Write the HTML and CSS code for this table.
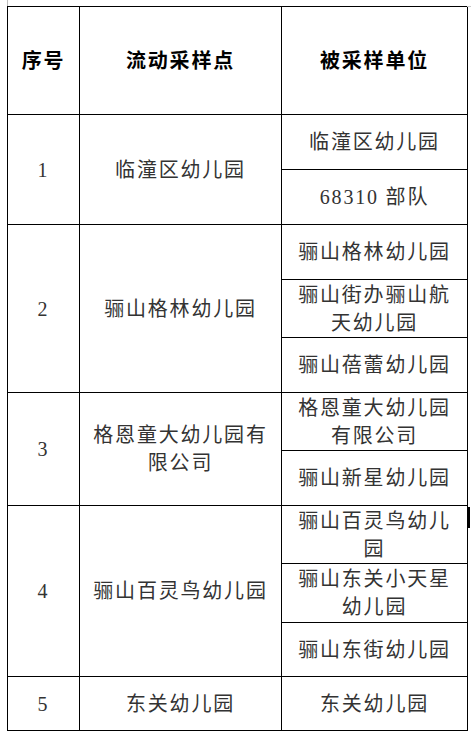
FILE: index.html
```html
<!DOCTYPE html>
<html lang="zh-CN">
<head>
<meta charset="utf-8">
<title>流动采样点</title>
<link rel="stylesheet" href="styles.css">
</head>
<body>
<div class="page">
  <span class="mark-left"></span>
  <span class="mark-right"></span>
  <span class="caret"></span>
  <table class="sheet">
    <colgroup>
      <col class="c1"><col class="c2"><col class="c3">
    </colgroup>
    <thead>
      <tr class="hd">
        <th>序号</th>
        <th>流动采样点</th>
        <th>被采样单位</th>
      </tr>
    </thead>
    <tbody>
      <tr class="h55">
        <td rowspan="2">1</td>
        <td rowspan="2">临潼区幼儿园</td>
        <td>临潼区幼儿园</td>
      </tr>
      <tr class="h55"><td>68310 部队</td></tr>

      <tr class="h55">
        <td rowspan="3">2</td>
        <td rowspan="3">骊山格林幼儿园</td>
        <td>骊山格林幼儿园</td>
      </tr>
      <tr class="h58"><td>骊山街办骊山航天幼儿园</td></tr>
      <tr class="h55"><td>骊山蓓蕾幼儿园</td></tr>

      <tr class="h58">
        <td rowspan="2">3</td>
        <td rowspan="2">格恩童大幼儿园有限公司</td>
        <td>格恩童大幼儿园有限公司</td>
      </tr>
      <tr class="h55"><td>骊山新星幼儿园</td></tr>

      <tr class="h58">
        <td rowspan="3">4</td>
        <td rowspan="3">骊山百灵鸟幼儿园</td>
        <td>骊山百灵鸟幼儿园</td>
      </tr>
      <tr class="h59"><td>骊山东关小天星幼儿园</td></tr>
      <tr class="h54"><td>骊山东街幼儿园</td></tr>

      <tr class="h54">
        <td>5</td>
        <td>东关幼儿园</td>
        <td>东关幼儿园</td>
      </tr>
    </tbody>
  </table>
</div>
</body>
</html>
```

FILE: styles.css
```css
html, body {
  margin: 0;
  padding: 0;
  background: #ffffff;
}

.page {
  position: relative;
  padding: 6px 0 0 7px;
}

.sheet {
  border-collapse: collapse;
  table-layout: fixed;
  width: 460px;
  font-family: "Liberation Serif", "Noto Sans CJK SC", serif;
  font-size: 20px;
  line-height: 28px;
  color: #333333;
}

.c1 { width: 72px; }
.c2 { width: 202px; }
.c3 { width: 186px; }

.sheet th,
.sheet td {
  border: 1px solid #000;
  padding: 0 10px;
  text-align: center;
  vertical-align: middle;
  letter-spacing: 1.8px;
  word-break: break-all;
}

.sheet th {
  font-weight: 700;
  color: #000;
}

.hd { height: 108px; }
.h54 { height: 54px; }
.h55 { height: 55px; }
.h58 { height: 58px; }
.h59 { height: 59px; }

.mark-left {
  position: absolute;
  left: 7px;
  top: 0;
  height: 6px;
  border-left: 1px dashed #bdbdbd;
}

.mark-right {
  position: absolute;
  left: 467px;
  top: 6px;
  width: 4px;
  border-top: 1px solid #c8c8c8;
}

.caret {
  position: absolute;
  left: 468px;
  top: 507px;
  width: 2px;
  height: 21px;
  background: #000;
}
```
